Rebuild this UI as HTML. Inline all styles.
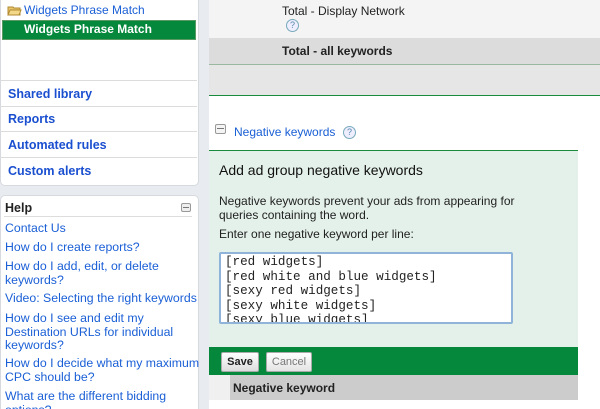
<!DOCTYPE html>
<html style="overflow:hidden"><head><style>
body{margin:0;width:600px;height:409px;overflow:hidden;background:#fff;font-family:"Liberation Sans",sans-serif;position:relative}
.a{position:absolute}
.side{left:0;top:0;width:209px;height:409px;background:#e8ebf0}
.p1{left:0;top:-5px;width:197px;height:189px;background:#fff;border:1px solid #d6d9de;border-radius:5px}
.p2{left:0;top:195px;width:197px;height:220px;background:#fff;border:1px solid #d6d9de;border-radius:5px}
.nav{left:8px;font-size:12.5px;font-weight:bold;color:#1a4fd0}
.hr{left:0;width:197px;height:1px;background:#dcdcdc}
.h{left:5px;font-size:12.3px;color:#1a5fd6;line-height:13.5px;white-space:nowrap}
</style></head><body>
<div class="a side"></div>
<div class="a p1"></div>
<div class="a" style="left:7px;top:3px;width:15px;height:11px;"><svg width="15" height="11"><path d="M1 2h5l1 1h6v7H1z" fill="#e8c46a" stroke="#b08a30"/><path d="M3 5h11l-2 5H1z" fill="#f3d88a" stroke="#b08a30"/></svg></div>
<div class="a" style="left:24px;top:3px;font-size:12px;color:#1a5fd6">Widgets Phrase Match</div>
<div class="a" style="left:2px;top:20px;width:192px;height:18px;background:#05883c;border:1px solid #5a9a62"></div>
<div class="a" style="left:24px;top:22px;font-size:12px;font-weight:bold;color:#fff">Widgets Phrase Match</div>
<div class="a hr" style="top:80px"></div>
<div class="a nav" style="top:87px">Shared library</div>
<div class="a hr" style="top:106px"></div>
<div class="a nav" style="top:112px">Reports</div>
<div class="a hr" style="top:131px"></div>
<div class="a nav" style="top:138px">Automated rules</div>
<div class="a hr" style="top:157px"></div>
<div class="a nav" style="top:164px">Custom alerts</div>
<div class="a p2"></div>
<div class="a" style="left:5px;top:201px;font-size:12.5px;font-weight:bold;color:#222">Help</div>
<div class="a" style="left:181px;top:203px;width:8px;height:7px;border:1px solid #999;border-radius:2px;background:#eee"><div style="margin:3px 1px 0;height:1px;background:#777"></div></div>
<div class="a" style="left:4px;top:216px;width:188px;height:1px;background:#ddd"></div>
<div class="a h" style="top:222px">Contact Us</div>
<div class="a h" style="top:241px">How do I create reports?</div>
<div class="a h" style="top:260px">How do I add, edit, or delete<br>keywords?</div>
<div class="a h" style="top:292px">Video: Selecting the right keywords</div>
<div class="a h" style="top:312px">How do I see and edit my<br>Destination URLs for individual<br>keywords?</div>
<div class="a h" style="top:357px">How do I decide what my maximum<br>CPC should be?</div>
<div class="a h" style="top:390px">What are the different bidding<br>options?</div>

<div class="a" style="left:209px;top:0;width:391px;height:38px;background:#f4f4f4"></div>
<div class="a" style="left:282px;top:4px;font-size:12px;color:#222">Total - Display Network</div>
<div class="a" style="left:286px;top:19px;width:11px;height:11px;border:1px solid #7ab;border-radius:50%;font-size:9px;line-height:11px;text-align:center;color:#58a;background:#eef">?</div>
<div class="a" style="left:209px;top:38px;width:391px;height:26px;background:#dcdcdc;border-bottom:1px solid #9ab89f"></div>
<div class="a" style="left:282px;top:44px;font-size:12px;font-weight:bold;color:#222">Total - all keywords</div>
<div class="a" style="left:209px;top:65px;width:391px;height:30px;background:#e6e6e6;border-bottom:1px solid #1a8a3c"></div>
<div class="a" style="left:215px;top:124px;width:9px;height:8px;border:1px solid #999;border-radius:2px;background:#f4f4f4"><div style="margin:3px 1px 0;height:1px;background:#777"></div></div>
<div class="a" style="left:234px;top:125px;font-size:12px;color:#1a5fd6">Negative keywords</div>
<div class="a" style="left:343px;top:126px;width:11px;height:11px;border:1px solid #7ab;border-radius:50%;font-size:9px;line-height:11px;text-align:center;color:#58a;background:#eef">?</div>
<div class="a" style="left:209px;top:150px;width:369px;height:197px;background:#e4f1ea;border-top:1px solid #1a8a3c"></div>
<div class="a" style="left:219px;top:162px;font-size:14px;color:#111">Add ad group negative keywords</div>
<div class="a" style="left:219px;top:194px;font-size:12px;color:#222;line-height:14px">Negative keywords prevent your ads from appearing for<br>queries containing the word.</div>
<div class="a" style="left:219px;top:227px;font-size:12px;color:#222">Enter one negative keyword per line:</div>
<div class="a" style="left:219px;top:252px;width:294px;height:72px;background:#fff;border:2px solid #8fb3d9;border-radius:2px;overflow:hidden;font-family:'Liberation Mono',monospace;font-size:12.6px;line-height:14.5px;color:#222;padding:1px 4px;box-sizing:border-box;white-space:nowrap">[red widgets]<br>[red white and blue widgets]<br>[sexy red widgets]<br>[sexy white widgets]<br>[sexy blue widgets]</div>
<div class="a" style="left:209px;top:347px;width:369px;height:28px;background:#05883c"></div>
<div class="a" style="left:221px;top:352px;width:36px;height:18px;background:linear-gradient(#fff,#ddd);border:1px solid #aaa;border-radius:2px;font-size:11px;font-weight:bold;text-align:center;line-height:18px;color:#222">Save</div>
<div class="a" style="left:266px;top:352px;width:44px;height:18px;background:linear-gradient(#fff,#e4e4e4);border:1px solid #aaa;border-radius:2px;font-size:11px;text-align:center;line-height:18px;color:#777">Cancel</div>
<div class="a" style="left:209px;top:375px;width:369px;height:25px;background:#f0f0f0"></div>
<div class="a" style="left:230px;top:375px;width:348px;height:25px;background:#cccccc"></div>
<div class="a" style="left:233px;top:381px;font-size:12px;font-weight:bold;color:#222">Negative keyword</div>
</body></html>
